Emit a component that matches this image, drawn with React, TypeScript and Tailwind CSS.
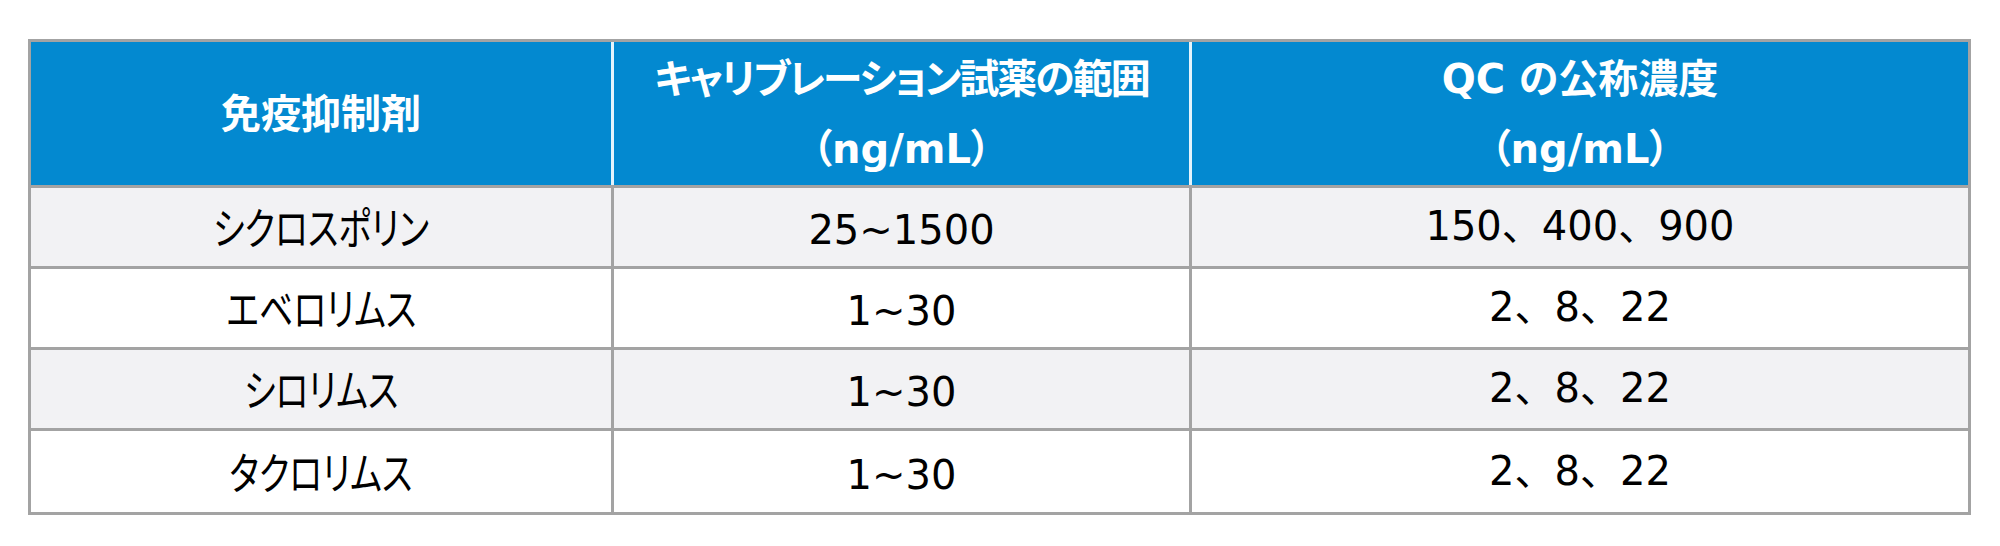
const rows = [
  { name: 'シクロスポリン', range: '25~1500', qc: '150、400、900' },
  { name: 'エベロリムス', range: '1~30', qc: '2、8、22' },
  { name: 'シロリムス', range: '1~30', qc: '2、8、22' },
  { name: 'タクロリムス', range: '1~30', qc: '2、8、22' },
];

const font = 'font-["DejaVu_Sans","Noto_Sans_CJK_JP",sans-serif]';

export default function App() {
  return (
    <div className={`min-h-[546px] bg-white pl-[28px] pt-[39px] ${font}`}>
      <div className="w-[1943px] border-[3px] border-[#a3a3a3]">
        {/* header */}
        <div className="grid h-[146px] grid-cols-[580px_578px_1fr] border-b-[3px] border-[#a3a3a3] bg-[#0389d0] text-[40px] font-bold leading-[70px] text-white [font-feature-settings:'palt']">
          <div className="flex items-center justify-center">免疫抑制剤</div>
          <div className="flex flex-col items-center justify-center border-l-[3px] border-[#e4f4fc]">
            <span className="tracking-[-2px]">キャリブレーション試薬の範囲</span>
            <span className="px-[8px]">（ng/mL）</span>
          </div>
          <div className="flex flex-col items-center justify-center border-l-[3px] border-[#e4f4fc]">
            <span>QC の公称濃度</span>
            <span className="px-[8px]">（ng/mL）</span>
          </div>
        </div>

        {/* body */}
        {rows.map((r, i) => (
          <div
            key={r.name}
            className={`grid h-[81px] grid-cols-[580px_578px_1fr] text-[40px] leading-none text-black ${
              i % 2 === 0 ? 'bg-[#f2f2f4]' : 'bg-white'
            } ${i < rows.length - 1 ? 'border-b-[3px] border-[#a3a3a3]' : ''}`}
          >
            <div className="flex items-center justify-center pt-[6px] text-[44px] [font-feature-settings:'palt']">
              <span className="inline-block scale-x-[0.77]">{r.name}</span>
            </div>
            <div className="flex items-center justify-center border-l-[3px] border-[#a3a3a3] pt-[6px]">{r.range}</div>
            <div className="flex items-center justify-center border-l-[3px] border-[#a3a3a3] pb-[2px]">{r.qc}</div>
          </div>
        ))}
      </div>
    </div>
  );
}
